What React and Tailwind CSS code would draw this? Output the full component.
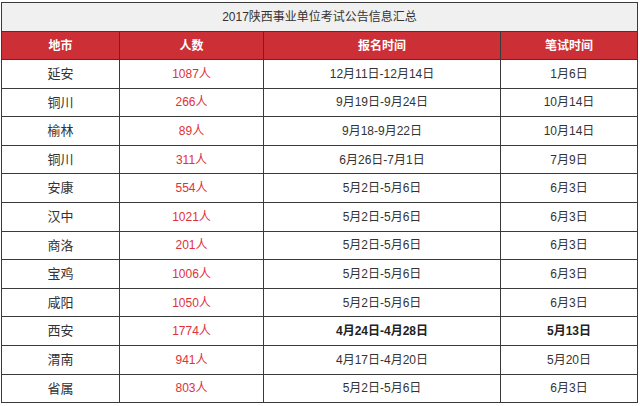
import React from 'react';

const rows = [
  { city: '延安', count: '1087人', apply: '12月11日-12月14日', exam: '1月6日' },
  { city: '铜川', count: '266人', apply: '9月19日-9月24日', exam: '10月14日' },
  { city: '榆林', count: '89人', apply: '9月18-9月22日', exam: '10月14日' },
  { city: '铜川', count: '311人', apply: '6月26日-7月1日', exam: '7月9日' },
  { city: '安康', count: '554人', apply: '5月2日-5月6日', exam: '6月3日' },
  { city: '汉中', count: '1021人', apply: '5月2日-5月6日', exam: '6月3日' },
  { city: '商洛', count: '201人', apply: '5月2日-5月6日', exam: '6月3日' },
  { city: '宝鸡', count: '1006人', apply: '5月2日-5月6日', exam: '6月3日' },
  { city: '咸阳', count: '1050人', apply: '5月2日-5月6日', exam: '6月3日' },
  { city: '西安', count: '1774人', apply: '4月24日-4月28日', exam: '5月13日', bold: true },
  { city: '渭南', count: '941人', apply: '4月17日-4月20日', exam: '5月20日' },
  { city: '省属', count: '803人', apply: '5月2日-5月6日', exam: '6月3日' },
];

const font = { fontFamily: '"Liberation Sans", "Noto Sans CJK SC", sans-serif' };

export default function App() {
  return (
    <div className="w-[640px] h-[406px] bg-white pl-[1px] pt-[2px]" style={font}>
      <table className="w-[636px] border-collapse table-fixed text-[12px] text-[#333]">
        <colgroup>
          <col className="w-[118px]" />
          <col className="w-[144px]" />
          <col className="w-[237px]" />
          <col className="w-[137px]" />
        </colgroup>
        <tbody>
          <tr className="h-[29px]">
            <td colSpan={4} className="border border-[#3a3a3a] bg-[#f0f0f0] text-center align-middle">
              2017陕西事业单位考试公告信息汇总
            </td>
          </tr>
          <tr className="h-[28px] bg-[#cc2f35] text-white font-bold">
            <td className="border border-[#3a3a3a] text-center">地市</td>
            <td className="border border-[#3a3a3a] text-center">人数</td>
            <td className="border border-[#3a3a3a] text-center">报名时间</td>
            <td className="border border-[#3a3a3a] text-center">笔试时间</td>
          </tr>
          {rows.map((r, i) => (
            <tr key={i} className="h-[28.6px]">
              <td className="border border-[#3a3a3a] text-center text-[13px] text-[#333]">{r.city}</td>
              <td className="border border-[#3a3a3a] text-center text-[#e0303a]">{r.count}</td>
              <td className={`border border-[#3a3a3a] text-center ${r.bold ? 'font-bold text-[#222]' : ''}`}>{r.apply}</td>
              <td className={`border border-[#3a3a3a] text-center ${r.bold ? 'font-bold text-[#222]' : ''}`}>{r.exam}</td>
            </tr>
          ))}
        </tbody>
      </table>
    </div>
  );
}
